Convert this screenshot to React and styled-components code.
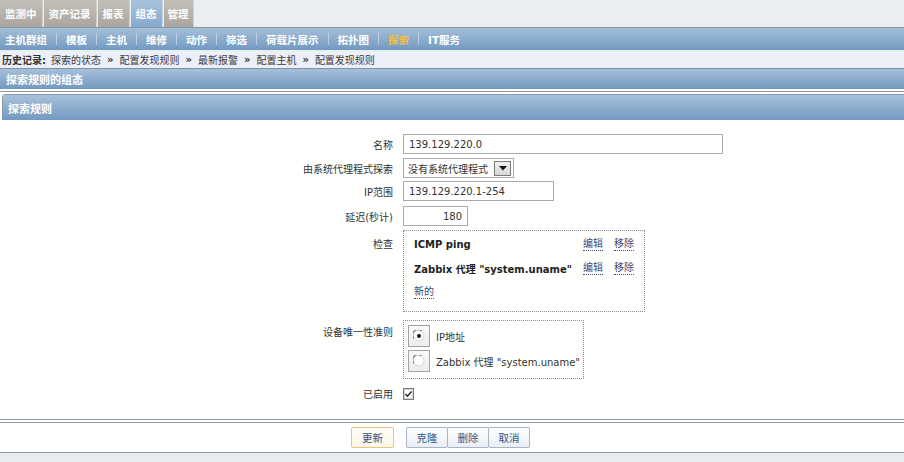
import React from 'react';
import styled, { createGlobalStyle } from 'styled-components';

const GlobalStyle = createGlobalStyle`
  body {
    margin: 0;
    background: #fff;
    font-family: "DejaVu Sans", "Noto Sans CJK SC", sans-serif;
    font-size: 10px;
    color: #333;
  }
`;

const Page = styled.div`
  width: 904px;
  height: 462px;
  overflow: hidden;
  display: flex;
  flex-direction: column;
`;

const TabBar = styled.div`
  height: 27px;
  background: #ebeef0;
  display: flex;
  gap: 1px;
`;

const Tab = styled.div`
  display: flex;
  align-items: center;
  padding: 0 ${p => p.$pad || 5}px;
  height: 27px;
  box-sizing: border-box;
  font-weight: bold;
  font-size: 10.5px;
  color: #fff;
  background: ${p => (p.$active
    ? 'linear-gradient(#a9c3dd, #86a9cd)'
    : 'linear-gradient(#c4c0b9, #aaa69f)')};
  border-right: 1px solid ${p => (p.$active ? '#c5d6e8' : '#d2cfca')};
`;

const NavBar = styled.div`
  height: 23px;
  box-sizing: border-box;
  border-top: 1px solid #8797a6;
  background: linear-gradient(#a4bfda, #7399c1);
  display: flex;
  align-items: center;
  padding-left: 5px;
`;

const NavItem = styled.span`
  font-weight: bold;
  font-size: 10.5px;
  color: ${p => (p.$active ? '#f5c13a' : '#fff')};
  white-space: nowrap;
`;

const NavSep = styled.span`
  width: 1px;
  height: 12px;
  margin: 0 9px;
  background: rgba(230, 238, 248, 0.55);
`;

const History = styled.div`
  height: 18px;
  box-sizing: border-box;
  border-top: 1px solid #e1f0e9;
  background: #eceef8;
  display: flex;
  align-items: center;
  padding-left: 2px;
  gap: 5px;
  white-space: nowrap;
`;

const HistoryTitle = styled.span`
  font-weight: bold;
  color: #333;
`;

const HistoryLink = styled.span`
  color: #3c3c3c;
`;

const Arrow = styled.span`
  color: #333;
  font-weight: bold;
  margin: 0 1px;
`;

const Band = styled.div`
  height: 21px;
  box-sizing: border-box;
  border-top: 1px solid #8492a0;
  background: linear-gradient(#a6c0da, #7399c1);
  color: #fff;
  font-weight: bold;
  font-size: 11px;
  display: flex;
  align-items: center;
  padding-left: 6px;
`;

const Divider = styled.div`
  height: 5px;
  box-sizing: border-box;
  border-top: 2px solid #fff;
  border-bottom: 2px solid #fff;
  background: #8e9aa6;
  background-clip: content-box;
`;

const FormFrame = styled.div`
  margin-left: 2px;
  border-left: 1px solid #8a98a6;
  border-top: 1px solid #8a98a6;
  border-top-left-radius: 4px;
  display: flex;
  flex-direction: column;
`;

const FormHeader = styled.div`
  height: 25px;
  box-sizing: border-box;
  background: linear-gradient(#a9c2db, #7399c1);
  color: #fff;
  font-weight: bold;
  font-size: 11px;
  display: flex;
  align-items: center;
  padding-left: 5px;
  border-top-left-radius: 3px;
`;

const FormBody = styled.div`
  background: #fffffd;
  padding: 14px 0 18px;
  margin-left: -3px;
  display: flex;
  flex-direction: column;
`;

const Row = styled.div`
  display: flex;
  align-items: ${p => (p.$top ? 'flex-start' : 'center')};
  margin-top: ${p => p.$mt || 0}px;
`;

const Label = styled.div`
  width: 403px;
  text-align: right;
  padding-right: 10px;
  box-sizing: border-box;
  color: #333;
  padding-top: ${p => p.$pt || 0}px;
  white-space: nowrap;
`;

const TextInput = styled.div`
  width: ${p => p.$w}px;
  height: 20px;
  box-sizing: border-box;
  border: 1px solid #a5acb2;
  background: #fff;
  display: flex;
  align-items: center;
  justify-content: ${p => (p.$right ? 'flex-end' : 'flex-start')};
  padding: 0 5px;
  color: #333;
  font-size: 10px;
`;

const Select = styled.div`
  width: 111px;
  height: 20px;
  box-sizing: border-box;
  border: 1px solid #a5acb2;
  background: #fff;
  display: flex;
  align-items: center;
  justify-content: space-between;
  padding: 0 2px 0 4px;
`;

const SelectArrow = styled.div`
  width: 17px;
  height: 15px;
  box-sizing: border-box;
  border: 1px solid #7a7a7a;
  background: linear-gradient(#f0f0f0, #d8d8d8);
  display: flex;
  align-items: center;
  justify-content: center;
`;

const DottedBox = styled.div`
  border: 1px dotted #8c8c8c;
  box-sizing: border-box;
`;

const CheckGrid = styled(DottedBox)`
  display: grid;
  grid-template-columns: auto auto auto;
  grid-auto-rows: 24px;
  column-gap: 11px;
  align-items: center;
  padding: 1px 10px 7px 10px;
`;

const CheckName = styled.span`
  font-weight: bold;
  color: #222;
  white-space: nowrap;
`;

const Link = styled.span`
  color: #3b4b78;
  border-bottom: 1px dotted #3b4b78;
  line-height: 13px;
  white-space: nowrap;
  justify-self: start;
`;

const RadioBox = styled(DottedBox)`
  display: flex;
  flex-direction: column;
  gap: 3px;
  padding: 4px 3px 6px 4px;
`;

const RadioRow = styled.div`
  display: flex;
  align-items: center;
  gap: 6px;
  white-space: nowrap;
`;

const RadioFrame = styled.div`
  width: 22px;
  height: 22px;
  box-sizing: border-box;
  border: 1px solid #a3a3a3;
  background: linear-gradient(#fafafa, #ececec);
  display: flex;
  align-items: center;
  justify-content: center;
`;

const Buttons = styled.div`
  border-top: 1px solid #8e9aa6;
  margin-top: 2px;
  height: 31px;
  box-sizing: border-box;
  border-bottom: 1px solid #8e9aa6;
  background: #fff;
  display: flex;
  align-items: center;
  padding-left: 351px;
  gap: 12px;
`;

const BtnGroup = styled.div`
  display: flex;
`;

const Button = styled.div`
  width: ${p => p.$w || 42}px;
  height: 21px;
  box-sizing: border-box;
  display: flex;
  align-items: center;
  justify-content: center;
  font-size: 10.5px;
  color: #34557f;
  border: 1px solid ${p => (p.$primary ? '#f0c27e' : '#a6b4c3')};
  margin-left: ${p => (p.$joined ? -1 : 0)}px;
  background: ${p => (p.$primary
    ? 'linear-gradient(#fffef8, #fdf6e6)'
    : 'linear-gradient(#ffffff, #e9eef5)')};
  border-radius: 2px;
`;

const BottomStrip = styled.div`
  flex: 1;
  background: #e9ecef;
`;

const FrameBottom = styled.div`
  border-top: 1px solid #8e9aa6;
  margin-left: -3px;
`;

function Radio({ checked }) {
  return (
    <svg width="12" height="12" viewBox="0 0 12 12">
      <circle cx="6" cy="6" r="5.5" fill="#fff" />
      <path d="M1.2 8.5 A5 5 0 0 1 8.5 1.2" stroke="#7a7a7a" strokeWidth="1.2" fill="none" />
      <path d="M2 9.5 A5 5 0 0 0 9.5 2" stroke="#dcdcdc" strokeWidth="1.2" fill="none" />
      {checked && <circle cx="6" cy="6" r="2" fill="#111" />}
    </svg>
  );
}

function CheckMark() {
  return (
    <svg width="11" height="12" viewBox="0 0 11 12">
      <rect x="0.5" y="0.5" width="10" height="11" fill="#fff" stroke="#7a7a7a" />
      <rect x="1.5" y="1.5" width="8" height="9" fill="none" stroke="#d4d4d4" />
      <path d="M2.5 6 L4.5 8.2 L8.5 3.5" stroke="#222" strokeWidth="1.4" fill="none" />
    </svg>
  );
}

const tabs = [
  { t: '监测中', pad: 5 },
  { t: '资产记录', pad: 5 },
  { t: '报表', pad: 5 },
  { t: '组态', pad: 5, active: true },
  { t: '管理', pad: 4 },
];

const nav = ['主机群组', '模板', '主机', '维修', '动作', '筛选', '荷载片展示', '拓扑图', '探索', 'IT服务'];

const history = ['探索的状态', '配置发现规则', '最新报警', '配置主机', '配置发现规则'];

export default function App() {
  return (
    <Page>
      <GlobalStyle />
      <TabBar>
        {tabs.map(tab => (
          <Tab key={tab.t} $active={tab.active} $pad={tab.pad}>{tab.t}</Tab>
        ))}
      </TabBar>
      <NavBar>
        {nav.map((n, i) => (
          <React.Fragment key={n}>
            {i > 0 && <NavSep />}
            <NavItem $active={n === '探索'}>{n}</NavItem>
          </React.Fragment>
        ))}
      </NavBar>
      <History>
        <HistoryTitle>历史记录:</HistoryTitle>
        {history.map((h, i) => (
          <React.Fragment key={i}>
            {i > 0 && <Arrow>»</Arrow>}
            <HistoryLink>{h}</HistoryLink>
          </React.Fragment>
        ))}
      </History>
      <Band>探索规则的组态</Band>
      <Divider />
      <FormFrame>
        <FormHeader>探索规则</FormHeader>
        <FormBody>
          <Row>
            <Label>名称</Label>
            <TextInput $w={320}>139.129.220.0</TextInput>
          </Row>
          <Row $mt={4}>
            <Label>由系统代理程式探索</Label>
            <Select>
              <span>没有系统代理程式</span>
              <SelectArrow>
                <svg width="8" height="5" viewBox="0 0 8 5">
                  <path d="M0 0 H8 L4 4.5 Z" fill="#111" />
                </svg>
              </SelectArrow>
            </Select>
          </Row>
          <Row $mt={3}>
            <Label>IP范围</Label>
            <TextInput $w={151}>139.129.220.1-254</TextInput>
          </Row>
          <Row $mt={5}>
            <Label>延迟(秒计)</Label>
            <TextInput $w={65} $right>180</TextInput>
          </Row>
          <Row $mt={4} $top>
            <Label $pt={6}>检查</Label>
            <CheckGrid>
              <CheckName>ICMP ping</CheckName>
              <Link>编辑</Link>
              <Link>移除</Link>
              <CheckName>Zabbix 代理 "system.uname"</CheckName>
              <Link>编辑</Link>
              <Link>移除</Link>
              <Link>新的</Link>
            </CheckGrid>
          </Row>
          <Row $mt={8} $top>
            <Label $pt={4}>设备唯一性准则</Label>
            <RadioBox>
              <RadioRow>
                <RadioFrame><Radio checked /></RadioFrame>
                <span>IP地址</span>
              </RadioRow>
              <RadioRow>
                <RadioFrame><Radio /></RadioFrame>
                <span>Zabbix 代理 "system.uname"</span>
              </RadioRow>
            </RadioBox>
          </Row>
          <Row $mt={7}>
            <Label>已启用</Label>
            <CheckMark />
          </Row>
        </FormBody>
        <FrameBottom />
      </FormFrame>
      <Buttons>
        <Button $primary $w={43}>更新</Button>
        <BtnGroup>
          <Button>克隆</Button>
          <Button $joined>删除</Button>
          <Button $joined>取消</Button>
        </BtnGroup>
      </Buttons>
      <BottomStrip />
    </Page>
  );
}
